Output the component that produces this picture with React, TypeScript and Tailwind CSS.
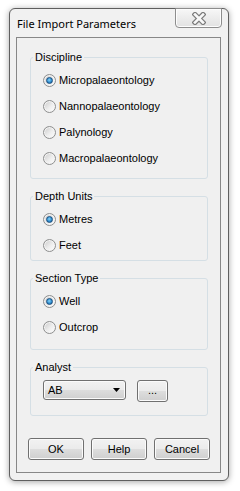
import React from "react";

const font = { fontFamily: '"Liberation Sans", Arial, sans-serif' };
const titleFont = { fontFamily: '"Noto Sans", "Open Sans", sans-serif' };

const btnFace =
  "border border-[#707070] rounded-[3px] bg-[linear-gradient(to_bottom,#f2f2f2_0%,#ebebeb_48%,#dddddd_52%,#cfcfcf_100%)] shadow-[inset_0_0_0_1px_#fbfbfb]";

function Radio({ checked, label }: { checked?: boolean; label: string }) {
  return (
    <div className="flex h-[26px] items-center gap-[3px]">
      <span className="grid size-[13px] place-items-center rounded-full border border-[#8e8f8f] bg-[linear-gradient(135deg,#c9c9c9_0%,#eeeeee_55%,#ffffff_100%)] shadow-[inset_0_0_0_1px_#f4f4f4]">
        {checked && (
          <span className="size-[7px] rounded-full border border-[#1c4f7f] bg-[radial-gradient(circle_at_45%_40%,#8ad4f7_0%,#2f8ed0_55%,#14528a_100%)]" />
        )}
      </span>
      <span className="text-[11px] leading-[14px] text-black">{label}</span>
    </div>
  );
}

function Group({
  title,
  height,
  children,
  className = "",
}: {
  title: string;
  height: string;
  children: React.ReactNode;
  className?: string;
}) {
  return (
    <div className={`relative w-[178px] rounded-[3px] border border-[#d5dfe5] ${height} ${className}`}>
      <span className="absolute left-[2px] top-[-8px] bg-[#f0f0f0] px-[2px] text-[11px] leading-[14px] text-black">
        {title}
      </span>
      {children}
    </div>
  );
}

function Button({ children, className = "" }: { children: React.ReactNode; className?: string }) {
  return (
    <div className={`flex items-center justify-center text-[11px] leading-[14px] text-black ${btnFace} ${className}`}>
      {children}
    </div>
  );
}

export default function App() {
  return (
    <div className="h-[491px] w-[240px] overflow-hidden bg-white pl-[9px] pt-[8px]" style={font}>
      <div className="flex h-[473px] w-[220px] flex-col rounded-[6px] border border-[#5f5f5f] bg-[#f1f1f1] shadow-[0_1px_6px_rgba(0,0,0,0.35)]">
        {/* title bar */}
        <div className="flex h-[28px] items-start justify-between">
          <span className="ml-[7px] mt-[7px] text-[11px] leading-[16px] text-black" style={titleFont}>
            File Import Parameters
          </span>
          <div className="mr-[6px] mt-[-1px] flex h-[20px] w-[47px] items-center justify-center rounded-b-[4px] border border-[#8d8d8d] bg-[linear-gradient(to_bottom,#f7f7f7_0%,#ececec_50%,#e2e2e2_100%)] shadow-[inset_0_0_0_1px_#fdfdfd]">
            <svg width="14" height="13" viewBox="0 0 14 13" className="ml-[1px]">
              <path d="M3 2.5 L11 10.5 M11 2.5 L3 10.5" stroke="#7a7a7a" strokeWidth="5" strokeLinecap="square" />
              <path d="M3 2.5 L11 10.5 M11 2.5 L3 10.5" stroke="#f8f8f8" strokeWidth="2.6" strokeLinecap="square" />
            </svg>
          </div>
        </div>

        {/* client area */}
        <div className="ml-[6px] h-[436px] w-[205px] border border-[#878787] bg-[#f0f0f0] pl-[13px] pt-[19px]">
          <Group title="Discipline" height="h-[122px]">
            <div className="pl-[12px] pt-[9px]">
              <Radio checked label="Micropalaeontology" />
              <Radio label="Nannopalaeontology" />
              <Radio label="Palynology" />
              <Radio label="Macropalaeontology" />
            </div>
          </Group>

          <Group title="Depth Units" height="h-[65px]" className="mt-[17px]">
            <div className="pl-[12px] pt-[9px]">
              <Radio checked label="Metres" />
              <Radio label="Feet" />
            </div>
          </Group>

          <Group title="Section Type" height="h-[72px]" className="mt-[17px]">
            <div className="pl-[12px] pt-[9px]">
              <Radio checked label="Well" />
              <Radio label="Outcrop" />
            </div>
          </Group>

          <Group title="Analyst" height="h-[49px]" className="mt-[17px]">
            <div className="flex items-start gap-[11px] pl-[12px] pt-[12px]">
              <div className={`flex h-[20px] w-[83px] items-center justify-between pl-[4px] pr-[5px] ${btnFace}`}>
                <span className="text-[11px] leading-[14px] text-black">AB</span>
                <svg width="7" height="4" viewBox="0 0 7 4">
                  <path d="M0 0 H7 L3.5 4 Z" fill="#000" />
                </svg>
              </div>
              <Button className="h-[22px] w-[31px] pb-[2px]">...</Button>
            </div>
          </Group>

          <div className="ml-[-2px] mt-[22px] flex gap-[7px]">
            <Button className="h-[22px] w-[56px]">OK</Button>
            <Button className="h-[22px] w-[56px]">Help</Button>
            <Button className="h-[22px] w-[56px]">Cancel</Button>
          </div>
        </div>
      </div>
    </div>
  );
}
